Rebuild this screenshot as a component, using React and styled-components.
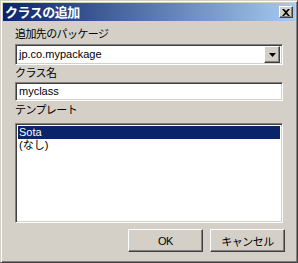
import React from "react";
import styled, { createGlobalStyle } from "styled-components";

const Global = createGlobalStyle`
  html, body { margin: 0; padding: 0; background: #d4d0c8; }
  * { box-sizing: border-box; }
  body {
    font-family: "Liberation Sans", "Noto Sans CJK JP", sans-serif;
    font-size: 11px;
  }
`;

const Window = styled.div`
  width: 298px;
  height: 263px;
  background: #d4d0c8;
  border-top: 1px solid #d4d0c8;
  border-left: 1px solid #d4d0c8;
  border-right: 1px solid #404040;
  border-bottom: 1px solid #404040;
  box-shadow: inset 1px 1px 0 #ffffff, inset -1px -1px 0 #808080;
  padding: 2px;
  display: flex;
  flex-direction: column;
`;

const TitleBar = styled.div`
  height: 18px;
  background: linear-gradient(to right, #0a246a, #a6caf0);
  display: flex;
  align-items: center;
  justify-content: space-between;
  padding: 0 2px 0 2px;
`;

const Title = styled.span`
  color: #fff;
  font-weight: bold;
  font-size: 13px;
  letter-spacing: -0.5px;
  font-family: "Noto Sans CJK JP", sans-serif;
  line-height: 18px;
`;

const RaisedButton = styled.button`
  font: inherit;
  color: #000;
  background: #d4d0c8;
  border-top: 1px solid #ffffff;
  border-left: 1px solid #ffffff;
  border-right: 1px solid #404040;
  border-bottom: 1px solid #404040;
  box-shadow: inset -1px -1px 0 #808080;
  padding: 0;
  margin: 0;
  display: flex;
  align-items: center;
  justify-content: center;
`;

const CloseButton = styled(RaisedButton)`
  width: 14px;
  height: 12px;
`;

const Body = styled.div`
  flex: 1;
  display: flex;
  flex-direction: column;
  padding: 4px 10px 0 12px;
`;

const Label = styled.div`
  height: 16px;
  line-height: 16px;
  margin-top: ${p => p.$mt || 0}px;
  color: #000;
  font-size: 11px;
  letter-spacing: -0.6px;
  white-space: nowrap;
`;

const Sunken = styled.div`
  background: #fff;
  border-top: 1px solid #808080;
  border-left: 1px solid #808080;
  border-right: 1px solid #ffffff;
  border-bottom: 1px solid #ffffff;
  box-shadow: inset 1px 1px 0 #404040, inset -1px -1px 0 #d4d0c8;
  margin-top: ${p => p.$mt || 0}px;
  height: ${p => p.$h}px;
  width: 268px;
`;

const Combo = styled(Sunken)`
  display: flex;
  align-items: center;
  padding: 2px;
`;

const ComboText = styled.div`
  flex: 1;
  padding-left: 1px;
  line-height: 17px;
  color: #000;
`;

const DropButton = styled(RaisedButton)`
  width: 16px;
  height: 17px;
`;

const Field = styled(Sunken)`
  padding: 0 3px;
  line-height: 17px;
  color: #000;
`;

const List = styled(Sunken)`
  padding: 2px;
`;

const Item = styled.div`
  height: 13px;
  line-height: 13px;
  padding-left: 1px;
  color: ${p => (p.$selected ? "#fff" : "#000")};
  background: ${p => (p.$selected ? "#0a246a" : "transparent")};
`;

const ButtonRow = styled.div`
  display: flex;
  justify-content: flex-end;
  gap: 7px;
  margin-top: 6px;
  padding-right: 0;
`;

const DialogButton = styled(RaisedButton)`
  width: 75px;
  height: 23px;
  letter-spacing: -0.5px;
`;

export default function App() {
  return (
    <>
      <Global />
      <Window>
        <TitleBar>
          <Title>クラスの追加</Title>
          <CloseButton aria-label="close">
            <svg width="8" height="7" viewBox="0 0 8 7">
              <path d="M0 0h2l2 2 2-2h2L5 3.5 8 7H6L4 5 2 7H0l3-3.5z" fill="#000" />
            </svg>
          </CloseButton>
        </TitleBar>
        <Body>
          <Label $mt={1}>追加先のパッケージ</Label>
          <Combo $mt={2} $h={21}>
            <ComboText>jp.co.mypackage</ComboText>
            <DropButton aria-label="open">
              <svg width="7" height="4" viewBox="0 0 7 4">
                <path d="M0 0h7L3.5 4z" fill="#000" />
              </svg>
            </DropButton>
          </Combo>
          <Label>クラス名</Label>
          <Field $mt={1} $h={19}>myclass</Field>
          <Label $mt={1}>テンプレート</Label>
          <List $mt={5} $h={100}>
            <Item $selected>Sota</Item>
            <Item>(なし)</Item>
          </List>
          <ButtonRow>
            <DialogButton>OK</DialogButton>
            <DialogButton>キャンセル</DialogButton>
          </ButtonRow>
        </Body>
      </Window>
    </>
  );
}
